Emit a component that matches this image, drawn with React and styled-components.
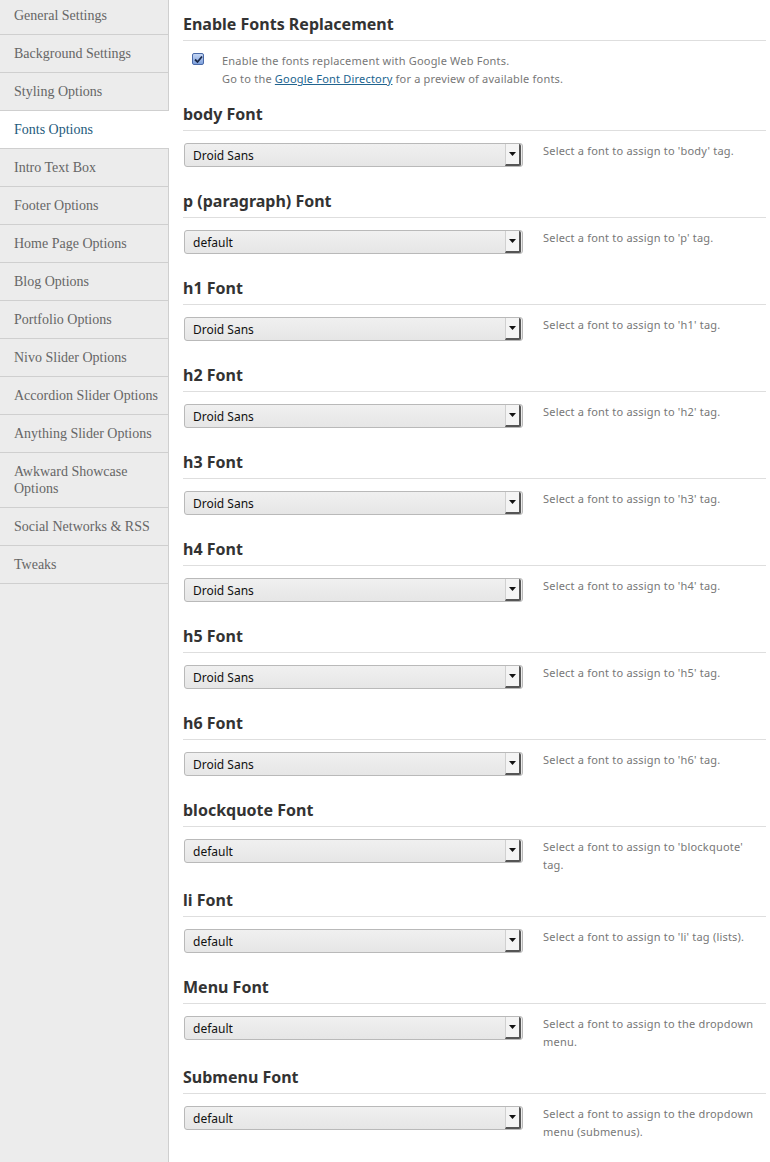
import React from "react";
import styled, { createGlobalStyle } from "styled-components";

const GlobalStyle = createGlobalStyle`
  html, body {
    margin: 0;
    padding: 0;
    background: #fff;
  }
  body {
    font-family: "Noto Sans", "DejaVu Sans", sans-serif;
  }
`;

const menuItems = [
  "General Settings",
  "Background Settings",
  "Styling Options",
  "Fonts Options",
  "Intro Text Box",
  "Footer Options",
  "Home Page Options",
  "Blog Options",
  "Portfolio Options",
  "Nivo Slider Options",
  "Accordion Slider Options",
  "Anything Slider Options",
  "Awkward Showcase Options",
  "Social Networks & RSS",
  "Tweaks",
];

const fontRows = [
  { title: "body Font", value: "Droid Sans", desc: "Select a font to assign to 'body' tag." },
  { title: "p (paragraph) Font", value: "default", desc: "Select a font to assign to 'p' tag." },
  { title: "h1 Font", value: "Droid Sans", desc: "Select a font to assign to 'h1' tag." },
  { title: "h2 Font", value: "Droid Sans", desc: "Select a font to assign to 'h2' tag." },
  { title: "h3 Font", value: "Droid Sans", desc: "Select a font to assign to 'h3' tag." },
  { title: "h4 Font", value: "Droid Sans", desc: "Select a font to assign to 'h4' tag." },
  { title: "h5 Font", value: "Droid Sans", desc: "Select a font to assign to 'h5' tag." },
  { title: "h6 Font", value: "Droid Sans", desc: "Select a font to assign to 'h6' tag." },
  { title: "blockquote Font", value: "default", desc: "Select a font to assign to 'blockquote' tag." },
  { title: "li Font", value: "default", desc: "Select a font to assign to 'li' tag (lists)." },
  { title: "Menu Font", value: "default", desc: "Select a font to assign to the dropdown menu." },
  { title: "Submenu Font", value: "default", desc: "Select a font to assign to the dropdown menu (submenus)." },
];

export default function App() {
  return (
    <>
      <GlobalStyle />
      <Page>
        <Sidebar>
          {menuItems.map((item) => (
            <MenuItem key={item} $active={item === "Fonts Options"}>
              {item}
            </MenuItem>
          ))}
        </Sidebar>
        <Content>
          <SectionTitle>Enable Fonts Replacement</SectionTitle>
          <CheckRow>
            <CheckBox>
              <svg width="9" height="9" viewBox="0 0 9 9">
                <path d="M1 4.5 L3.5 7 L8 1.5" fill="none" stroke="#1b2a4a" strokeWidth="1.8" />
              </svg>
            </CheckBox>
            <CheckText>
              Enable the fonts replacement with Google Web Fonts.
              <br />
              Go to the <Link href="#">Google Font Directory</Link> for a preview of available fonts.
            </CheckText>
          </CheckRow>
          {fontRows.map((row) => (
            <Section key={row.title}>
              <SectionTitle>{row.title}</SectionTitle>
              <FieldRow>
                <SelectBox>
                  <SelectValue>{row.value}</SelectValue>
                  <SelectArrow>
                    <svg width="7" height="4" viewBox="0 0 7 4">
                      <path d="M0 0 L7 0 L3.5 4 Z" fill="#111" />
                    </svg>
                  </SelectArrow>
                </SelectBox>
                <Description>{row.desc}</Description>
              </FieldRow>
            </Section>
          ))}
        </Content>
      </Page>
    </>
  );
}

const Page = styled.div`
  display: grid;
  grid-template-columns: 169px 1fr;
  min-height: 1162px;
`;

const Sidebar = styled.ul`
  list-style: none;
  margin: 0;
  padding: 0;
  background: #ececec;
  border-right: 1px solid #cfcfcf;
`;

const MenuItem = styled.li`
  padding: 10px 4px 10px 14px;
  font-family: "Liberation Serif", "DejaVu Serif", serif;
  font-size: 14px;
  line-height: 17px;
  color: ${(p) => (p.$active ? "#1e5a7c" : "#666")};
  background: ${(p) => (p.$active ? "#fff" : "transparent")};
  margin-right: ${(p) => (p.$active ? "-1px" : "0")};
  border-bottom: 1px solid #cfcfcf;

  &:first-child {
    padding-top: 7px;
  }
`;

const Content = styled.div`
  padding: 14px 4px 30px 14px;
`;

const SectionTitle = styled.h3`
  margin: 0;
  padding-bottom: 6px;
  font-size: 16px;
  line-height: 20px;
  font-weight: 700;
  color: #333;
  border-bottom: 1px solid #dedede;
`;

const CheckRow = styled.div`
  display: flex;
  align-items: flex-start;
  gap: 18px;
  margin: 11px 0 16px 9px;
`;

const CheckBox = styled.span`
  width: 10px;
  height: 10px;
  margin-top: 1px;
  display: flex;
  align-items: center;
  justify-content: center;
  border: 1px solid #4a6aa8;
  border-radius: 2px;
  background: linear-gradient(#c4d6f4, #7ea0dc);
`;

const CheckText = styled.div`
  font-size: 11px;
  line-height: 18px;
  letter-spacing: 0.2px;
  color: #777;
`;

const Link = styled.a`
  color: #21648f;
  text-decoration: underline;
`;

const Section = styled.div``;

const FieldRow = styled.div`
  display: flex;
  align-items: flex-start;
  margin-top: 11px;
`;

const SelectBox = styled.div`
  width: 337px;
  height: 22px;
  margin: 1px 20px 24px 1px;
  display: flex;
  align-items: center;
  border: 1px solid #b9b9b9;
  border-radius: 3px;
  background: linear-gradient(#f0f0f0, #e6e6e6);
  box-sizing: content-box;
`;

const SelectValue = styled.span`
  flex: 1;
  padding-left: 8px;
  font-size: 12px;
  color: #111;
`;

const SelectArrow = styled.span`
  width: 13px;
  height: 20px;
  margin-right: 1px;
  display: flex;
  align-items: center;
  justify-content: center;
  border-left: 1px solid #d0d0d0;
  border-right: 2px solid #555;
  border-bottom: 2px solid #555;
  border-radius: 0 2px 2px 0;
  background: #f4f4f4;
`;

const Description = styled.p`
  margin: 0;
  padding-bottom: 16px;
  width: 218px;
  font-size: 11px;
  line-height: 18px;
  letter-spacing: 0.2px;
  color: #777;
`;
